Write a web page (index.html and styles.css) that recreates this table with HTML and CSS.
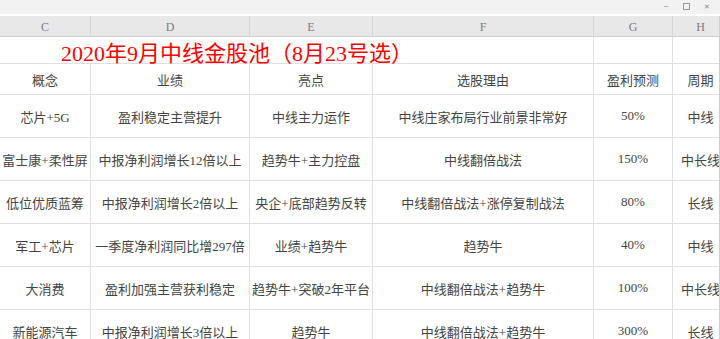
FILE: index.html
```html
<!DOCTYPE html>
<html lang="zh">
<head>
<meta charset="utf-8">
<link rel="stylesheet" href="styles.css">
</head>
<body>
<div class="titlebar">
  <span class="ctl">&#x2500;</span>
  <span class="ctl box"></span>
  <span class="ctl">&#x2715;</span>
</div>
<div class="sheet">
  <div class="grid">
    <div class="col">C</div><div class="col">D</div><div class="col">E</div><div class="col">F</div><div class="col">G</div><div class="col">H</div>

    <div class="title">2020年9月中线金股池（8月23号选）</div><div class="cell t"></div><div class="cell t"></div>

    <div class="cell h">概念</div><div class="cell h">业绩</div><div class="cell h">亮点</div><div class="cell h">选股理由</div><div class="cell h">盈利预测</div><div class="cell h">周期</div>

    <div class="cell">芯片+5G</div><div class="cell">盈利稳定主营提升</div><div class="cell">中线主力运作</div><div class="cell">中线庄家布局行业前景非常好</div><div class="cell">50%</div><div class="cell">中线</div>

    <div class="cell">富士康+柔性屏</div><div class="cell">中报净利润增长12倍以上</div><div class="cell">趋势牛+主力控盘</div><div class="cell">中线翻倍战法</div><div class="cell">150%</div><div class="cell">中长线</div>

    <div class="cell">低位优质蓝筹</div><div class="cell">中报净利润增长2倍以上</div><div class="cell">央企+底部趋势反转</div><div class="cell">中线翻倍战法+涨停复制战法</div><div class="cell">80%</div><div class="cell">长线</div>

    <div class="cell">军工+芯片</div><div class="cell">一季度净利润同比增297倍</div><div class="cell">业绩+趋势牛</div><div class="cell">趋势牛</div><div class="cell">40%</div><div class="cell">中线</div>

    <div class="cell">大消费</div><div class="cell">盈利加强主营获利稳定</div><div class="cell">趋势牛+突破2年平台</div><div class="cell">中线翻倍战法+趋势牛</div><div class="cell">100%</div><div class="cell">中长线</div>

    <div class="cell">新能源汽车</div><div class="cell">中报净利润增长3倍以上</div><div class="cell">趋势牛</div><div class="cell">中线翻倍战法+趋势牛</div><div class="cell">300%</div><div class="cell">长线</div>
  </div>
</div>
</body>
</html>
```

FILE: styles.css
```css
* { box-sizing: border-box; }
html, body { margin: 0; padding: 0; }
body {
  width: 720px;
  height: 339px;
  overflow: hidden;
  background: #ffffff;
  font-family: "Liberation Serif", "Noto Sans CJK SC", serif;
}
.titlebar {
  height: 16px;
  background: #f2f2f2;
  border-bottom: 2px solid #ffffff;
  display: flex;
  justify-content: flex-end;
  align-items: center;
  gap: 11px;
  padding-right: 8px;
  padding-bottom: 1px;
}
.ctl {
  font-family: "DejaVu Sans", sans-serif;
  font-size: 7px;
  color: #8a8a8a;
  width: 10px;
  text-align: center;
  line-height: 8px;
}
.ctl.box {
  width: 7px;
  height: 7px;
  border: 1px solid #9a9a9a;
  margin: 0 1px;
}
.sheet {
  width: 720px;
  height: 323px;
  overflow: hidden;
  border-right: 1px solid #cfcfcf;
}
.grid {
  display: grid;
  width: 729px;
  grid-template-columns: 91px 159px 123px 221px 79px 56px;
  grid-template-rows: 21px 27px 31px repeat(6, 43px);
}
.col {
  background: #e8e8e8;
  border-right: 1px solid #d6d6d6;
  border-bottom: 1px solid #cdcdcd;
  color: #7c7c7c;
  font-family: "Liberation Serif", serif;
  font-size: 12px;
  display: flex;
  align-items: center;
  justify-content: center;
  padding-top: 2px;
}
.title {
  grid-column: 1 / 5;
  border-right: 1px solid #e0e0e0;
  border-bottom: 1px solid #e0e0e0;
  color: #ff0000;
  font-size: 22px;
  display: flex;
  align-items: center;
  padding-left: 61px;
  padding-top: 1px;
  white-space: nowrap;
}
.cell {
  border-right: 1px solid #e0e0e0;
  border-bottom: 1px solid #e0e0e0;
  color: #444444;
  font-size: 13px;
  display: flex;
  align-items: center;
  justify-content: center;
  white-space: nowrap;
  overflow: visible;
}
.cell.h { padding-top: 1px; }
```
